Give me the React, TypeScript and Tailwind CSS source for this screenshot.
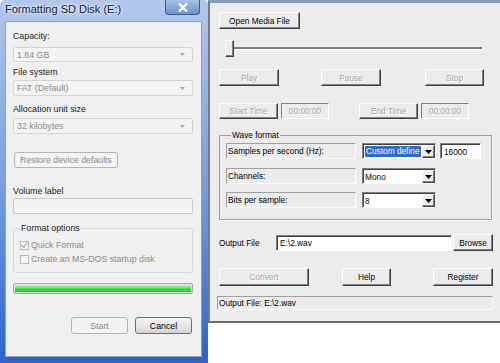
import React from 'react';

const sans = "font-['Liberation_Sans',Arial,sans-serif]";
const raised =
  'bg-[#ececec] border border-t-white border-l-white border-r-[#404040] border-b-[#404040] shadow-[inset_-1px_-1px_0_#808080]';
const sunken = 'border border-t-[#808080] border-l-[#808080] border-r-white border-b-white';
const disabledText = 'text-[#a3a3a3] [text-shadow:1px_1px_0_#fff]';

function Arrow({ color = '#000' }: { color?: string }) {
  return (
    <svg width="7" height="4" viewBox="0 0 7 4">
      <polygon points="0,0 7,0 3.5,4" fill={color} />
    </svg>
  );
}

// ---- Windows 7 style controls (left dialog)

function W7Select({ text, className = '' }: { text: string; className?: string }) {
  return (
    <div
      className={`w-[180px] flex items-center justify-between rounded-[2px] border border-[#d5d5d5] bg-[#f4f4f4] pl-[3px] pr-[7px] ${className}`}
    >
      <span className="text-[#8a8a8a]">{text}</span>
      <svg width="5" height="3" viewBox="0 0 5 3">
        <polygon points="0,0 5,0 2.5,3" fill="#a8a8a8" />
      </svg>
    </div>
  );
}

function W7Check({ label, checked }: { label: string; checked?: boolean }) {
  return (
    <div className="flex items-center h-[12px]">
      <div className="w-[9px] h-[9px] border border-[#b9b9b9] bg-[#f6f6f6] flex items-center justify-center">
        {checked && (
          <svg width="7" height="6" viewBox="0 0 7 6">
            <path d="M0.5 3 L2.7 5.3 L6.5 0.5" stroke="#a5a5a5" strokeWidth="1.2" fill="none" />
          </svg>
        )}
      </div>
      <span className="ml-[2px] text-[#8a8a8a]">{label}</span>
    </div>
  );
}

function FormatDialog() {
  return (
    <div className="w-[208px] h-[363px] shrink-0 flex flex-col rounded-t-[5px] bg-linear-to-b from-[#b3c7ea] via-[#7a9fdb] to-[#2e62c8] px-[5px] pb-[6px] pr-[6px]">
      <div className="h-[21px] flex items-start justify-between">
        <span className="mt-[3px] text-[11px] leading-[13px] text-[#10203a] [text-shadow:0_0_6px_#fff,0_0_3px_#fff]">
          Formatting SD Disk (E:)
        </span>
        <div className="mr-[2px] w-[35px] h-[15px] rounded-b-[4px] border border-t-0 border-[#3d5c92] bg-linear-to-b from-[#a9bfe5] to-[#7090cc] flex items-center justify-center">
          <svg width="10" height="9" viewBox="0 0 10 9">
            <path d="M1.5 1 L8.5 8 M8.5 1 L1.5 8" stroke="#fff" strokeWidth="2.2" strokeLinecap="round" />
          </svg>
        </div>
      </div>
      <div className="flex-1 flex flex-col border border-[#8ba0c6] bg-[#f0f0f0] pl-[7px] text-[8.8px] leading-[12px] text-[#1a1a1a]">
        <div className="mt-[8px]">Capacity:</div>
        <W7Select text="1.84 GB" className="mt-[5px] h-[15px]" />
        <div className="mt-[4px]">File system</div>
        <W7Select text="FAT (Default)" className="mt-[2px] h-[16px]" />
        <div className="mt-[7px]">Allocation unit size</div>
        <W7Select text="32 kilobytes" className="mt-[3px] h-[16px]" />
        <div className="mt-[18px] ml-[1px] w-[104px] h-[16px] rounded-[3px] border border-[#b5b5b5] bg-[#f4f4f4] flex items-center justify-center text-[#8a8a8a]">
          Restore device defaults
        </div>
        <div className="mt-[17px]">Volume label</div>
        <div className="mt-[1px] w-[180px] h-[16px] rounded-[2px] border border-[#c9c9c9] bg-[#f4f4f4]" />
        <fieldset className="mt-[8px] w-[180px] rounded-[3px] border border-[#d7d7d7] pl-[6px] pb-[7px]">
          <legend className="ml-[0px] px-[1px] leading-[12px]">Format options</legend>
          <div className="mt-[5px]">
            <W7Check label="Quick Format" checked />
          </div>
          <div className="mt-[2px]">
            <W7Check label="Create an MS-DOS startup disk" />
          </div>
        </fieldset>
        <div className="mt-[10px] w-[180px] h-[11px] rounded-[2px] border border-[#a9a9a9] bg-[#e6e6e6] p-[1px]">
          <div className="h-full w-full bg-linear-to-b from-[#c3f3c3] via-[#3fe03f] to-[#17cf17]" />
        </div>
        <div className="mt-[23px] w-[180px] flex justify-end gap-[7px] pr-[1px]">
          <div className="w-[57px] h-[17px] rounded-[3px] border border-[#b3b6b8] bg-[#f4f4f4] flex items-center justify-center text-[#8a8a8a]">
            Start
          </div>
          <div className="w-[57px] h-[17px] rounded-[3px] border border-[#6f6f6f] bg-linear-to-b from-[#f3f3f3] via-[#e8e8e8] to-[#d2d2d2] flex items-center justify-center text-black">
            Cancel
          </div>
        </div>
      </div>
    </div>
  );
}

// ---- Classic style controls (right window)

function Btn({
  label,
  w,
  h = 17,
  disabled,
  className = '',
}: {
  label: string;
  w: string;
  h?: number;
  disabled?: boolean;
  className?: string;
}) {
  return (
    <div
      className={`${raised} ${w} ${h === 18 ? 'h-[18px]' : h === 16 ? 'h-[16px]' : 'h-[17px]'} shrink-0 flex items-center justify-center ${disabled ? disabledText : 'text-black'} ${className}`}
    >
      {label}
    </div>
  );
}

function TimeField({ className = '' }: { className?: string }) {
  return (
    <div
      className={`w-[48px] h-[16px] ${sunken} bg-[#ececec] flex items-center justify-center ${disabledText} ${className}`}
    >
      00:00:00
    </div>
  );
}

function ClassicSelect({ children, className = '' }: { children: React.ReactNode; className?: string }) {
  return (
    <div
      className={`w-[74px] h-[16px] ${sunken} shadow-[inset_1px_1px_0_#404040] bg-white flex ${className}`}
    >
      <div className="flex-1 flex items-center pl-[2px] pt-[1px]">{children}</div>
      <div className={`${raised} w-[13px] mt-[1px] flex items-center justify-center`}>
        <Arrow />
      </div>
    </div>
  );
}

function LabelBox({ label }: { label: string }) {
  return (
    <div className="w-[130px] h-[16px] border border-t-[#a0a0a0] border-l-[#a0a0a0] border-r-white border-b-white flex items-center pl-[1px]">
      {label}
    </div>
  );
}

function ConverterWindow() {
  return (
    <div
      className={`w-[292px] h-[323px] shrink-0 flex flex-col bg-[#ececec] border-t-[3px] border-t-[#8d9bbf] border-l-[2px] border-l-[#7b7b7b] border-b-[2px] border-b-[#6d6d6d] pl-[9px] text-[8.3px] leading-[12px] text-black ${sans}`}
    >
      <Btn label="Open Media File" w="w-[81px]" className="mt-[9px]" />

      <div className="mt-[11px] w-[263px] flex items-center">
        <div className="ml-[6px] w-[9px] h-[17px] border border-t-white border-l-white border-r-[#404040] border-b-[#404040] shadow-[inset_-1px_-1px_0_#808080] bg-[#ececec]" />
        <div className="flex-1 h-[3px] border-t-[2px] border-t-[#7d7d7d] border-b border-b-white" />
      </div>

      <div className="mt-[12px] flex">
        <Btn label="Play" w="w-[60px]" disabled />
        <Btn label="Pause" w="w-[60px]" disabled className="ml-[42px]" />
        <Btn label="Stop" w="w-[59px]" disabled className="ml-[44px]" />
      </div>

      <div className="mt-[17px] flex">
        <Btn label="Start Time" w="w-[59px]" h={16} disabled />
        <TimeField className="ml-[3px]" />
        <Btn label="End Time" w="w-[59px]" h={16} disabled className="ml-[30px]" />
        <TimeField className="ml-[3px]" />
      </div>

      <fieldset className="mt-[10px] w-[273px] border border-[#a0a0a0] shadow-[1px_1px_0_#fff] pl-[6px] pb-[11px]">
        <legend className="ml-[5px] px-[1px] leading-[12px]">Wave format</legend>
        <div className="mt-[2px] flex">
          <LabelBox label="Samples per second (Hz):" />
          <ClassicSelect className="ml-[6px]">
            <span className="bg-[#3169c6] text-white px-[1px] leading-[11px]">Custom define</span>
          </ClassicSelect>
          <div
            className={`ml-[4px] w-[41px] h-[16px] ${sunken} shadow-[inset_1px_1px_0_#404040] bg-white flex items-center pl-[3px] pt-[1px]`}
          >
            16000
          </div>
        </div>
        <div className="mt-[9px] flex">
          <LabelBox label="Channels:" />
          <ClassicSelect className="ml-[6px]">Mono</ClassicSelect>
        </div>
        <div className="mt-[8px] flex">
          <LabelBox label="Bits per sample:" />
          <ClassicSelect className="ml-[6px]">8</ClassicSelect>
        </div>
      </fieldset>

      <div className="mt-[14px] flex items-center">
        <div className="w-[57px]">Output File</div>
        <div
          className={`w-[176px] h-[16px] ${sunken} shadow-[inset_1px_1px_0_#404040] bg-white flex items-center pl-[3px] pt-[1px]`}
        >
          E:\2.wav
        </div>
        <Btn label="Browse" w="w-[40px]" className="ml-[1px]" />
      </div>

      <div className="mt-[17px] flex">
        <Btn label="Convert" w="w-[90px]" h={18} disabled />
        <Btn label="Help" w="w-[49px]" h={18} className="ml-[33px]" />
        <Btn label="Register" w="w-[60px]" h={18} className="ml-[42px]" />
      </div>

      <div className="mt-[10px] -ml-[2px] w-[276px] h-[14px] border border-t-[#a0a0a0] border-l-[#a0a0a0] border-r-white border-b-white flex items-center pl-[1px]">
        Output File: E:\2.wav
      </div>
    </div>
  );
}

export default function App() {
  return (
    <div className={`w-[500px] h-[363px] overflow-hidden bg-white flex items-start ${sans}`}>
      <FormatDialog />
      <ConverterWindow />
    </div>
  );
}
